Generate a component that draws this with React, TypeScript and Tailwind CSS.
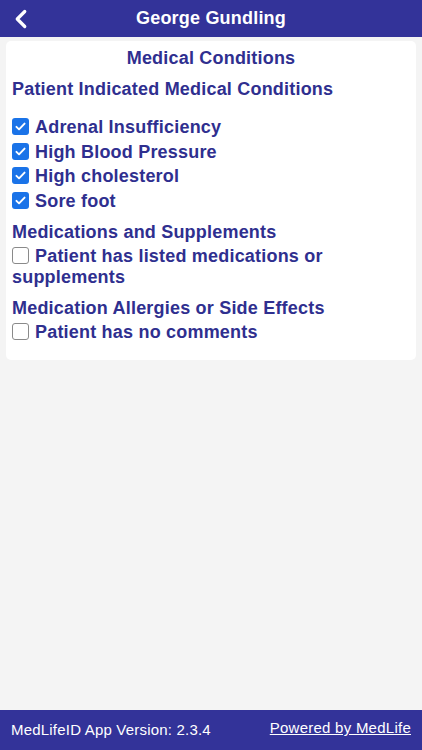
import { ChevronLeft } from "lucide-react";

interface Condition {
    label: string,
    checked: boolean
}

const conditions: Condition[] = [
    { label: "Adrenal Insufficiency", checked: true },
    { label: "High Blood Pressure", checked: true },
    { label: "High cholesterol", checked: true },
    { label: "Sore foot", checked: true },
];

const Box = ({ checked }: { checked: boolean }) => (
    checked
        ? <span className="inline-flex shrink-0 w-[17px] h-[17px] rounded-[3px] bg-[#1a73e8] items-center justify-center">
            <svg width="13" height="13" viewBox="0 0 16 16" fill="none">
                <path d="M3 8.5l3.2 3L13 4.5" stroke="white" strokeWidth="2.4" strokeLinecap="round" strokeLinejoin="round" />
            </svg>
        </span>
        : <span className="inline-block shrink-0 w-[17px] h-[17px] rounded-[3px] border border-[#8a8a8a] bg-white"></span>
);

const App = () => {
    return (
        <div className="w-[422px] h-[750px] flex flex-col bg-[#f4f4f4] font-['Liberation_Sans',Arial,sans-serif]">
            <div className="h-[37px] bg-[#333399] flex items-center relative shrink-0">
                <ChevronLeft className="absolute left-[6px] top-[4px] text-white" size={30} strokeWidth={2.6} />
                <div className="w-full text-center text-white font-bold text-[18px] tracking-[0.2px]">George Gundling</div>
            </div>
            <div className="flex-1">
                <div className="mx-[6px] mt-[4px] bg-white rounded-[5px] px-[6px] pt-[7px] pb-[17px] text-[#2f2f8f] font-bold text-[18px] tracking-[0.2px]">
                    <div className="text-center leading-[20px]">Medical Conditions</div>
                    <div className="leading-[20px] mt-[11px]">Patient Indicated Medical Conditions</div>
                    <div className="mt-[19px] flex flex-col">
                        {conditions.map((c, idx) => (
                            <div key={idx} className="flex items-start gap-[6px] h-[24.5px]">
                                <Box checked={c.checked} />
                                <span className="leading-[20px] -mt-[1px]">{c.label}</span>
                            </div>
                        ))}
                    </div>
                    <div className="leading-[20px] mt-[6px]">Medications and Supplements</div>
                    <div className="mt-[4px] leading-[21px]">
                        <span className="inline-flex leading-none align-[-2px] mr-[6px]"><Box checked={false} /></span>
                        Patient has listed medications or supplements
                    </div>
                    <div className="leading-[20px] mt-[10px]">Medication Allergies or Side Effects</div>
                    <div className="mt-[4px] leading-[21px]">
                        <span className="inline-flex leading-none align-[-2px] mr-[6px]"><Box checked={false} /></span>
                        Patient has no comments
                    </div>
                </div>
            </div>
            <div className="h-[40px] bg-[#333399] flex items-center justify-between px-[11px] text-white text-[15px] tracking-[0.2px] shrink-0">
                <span>MedLifeID App Version: 2.3.4</span>
                <span className="underline -mt-[3px] tracking-[0.25px]">Powered by MedLife</span>
            </div>
        </div>
    );
}

export default App;
